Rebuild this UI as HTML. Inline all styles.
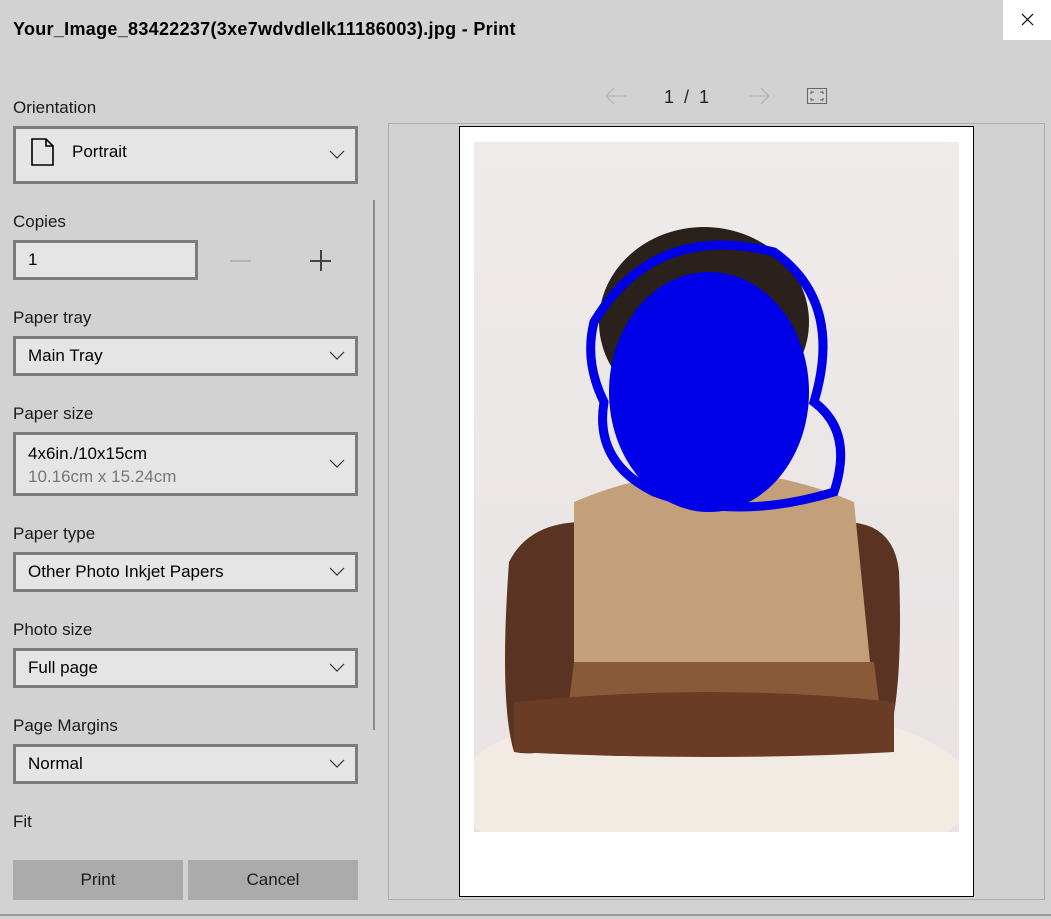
<!DOCTYPE html>
<html><head><meta charset="utf-8"><style>
*{margin:0;padding:0;box-sizing:border-box}
body{width:1051px;height:919px;background:#d2d2d2;font-family:"Liberation Sans",sans-serif;position:relative;overflow:hidden;color:#000}
.a{position:absolute}
.lbl{position:absolute;left:13px;font-size:17px;color:#1a1a1a}
.box{position:absolute;left:13px;width:345px;background:#e5e5e5;border:3px solid #7b7b7b;font-size:17px;padding-left:12px;display:flex;align-items:center}
.chev{position:absolute;right:10px;top:50%;margin-top:-5px}
.btn{position:absolute;top:860px;height:40px;width:170px;background:#ababab;font-size:17px;display:flex;align-items:center;justify-content:center;color:#1a1a1a}
</style></head><body>
<div class="a" style="left:13px;top:19px;font-size:18px;font-weight:bold;letter-spacing:0.3px">Your_Image_83422237(3xe7wdvdlelk11186003).jpg - Print</div>
<div class="a" style="left:1003px;top:0;width:48px;height:40px;background:#fff"><svg width="48" height="40"><path d="M19 14l11 11M30 14l-11 11" stroke="#000" stroke-width="1.2"/></svg></div>

<div class="lbl" style="top:98px">Orientation</div>
<div class="box" style="top:126px;height:58px;padding-left:14px;padding-bottom:6px"><svg width="26" height="30" style="margin-right:16px"><path d="M2 2h14l7 7v19H2z M16 2v7h7" fill="none" stroke="#000" stroke-width="1.6"/></svg>Portrait<svg class="chev" width="16" height="10"><path d="M1 1l7 7 7-7" fill="none" stroke="#333" stroke-width="1.2"/></svg></div>

<div class="lbl" style="top:212px">Copies</div>
<div class="box" style="top:240px;height:40px;width:185px">1</div>
<div class="a" style="left:230px;top:260px;width:21px;height:1.5px;background:#b4b4b4"></div>
<div class="a" style="left:310px;top:260px;width:21px;height:1.5px;background:#444"></div>
<div class="a" style="left:320px;top:250px;width:1.5px;height:21px;background:#444"></div>

<div class="lbl" style="top:308px">Paper tray</div>
<div class="box" style="top:336px;height:40px">Main Tray<svg class="chev" width="16" height="10"><path d="M1 1l7 7 7-7" fill="none" stroke="#333" stroke-width="1.2"/></svg></div>

<div class="lbl" style="top:404px">Paper size</div>
<div class="box" style="top:432px;height:64px;display:block;padding-top:7px;line-height:23px">4x6in./10x15cm<br><span style="color:#777">10.16cm x 15.24cm</span><svg class="chev" width="16" height="10"><path d="M1 1l7 7 7-7" fill="none" stroke="#333" stroke-width="1.2"/></svg></div>

<div class="lbl" style="top:524px">Paper type</div>
<div class="box" style="top:552px;height:40px">Other Photo Inkjet Papers<svg class="chev" width="16" height="10"><path d="M1 1l7 7 7-7" fill="none" stroke="#333" stroke-width="1.2"/></svg></div>

<div class="lbl" style="top:620px">Photo size</div>
<div class="box" style="top:648px;height:40px">Full page<svg class="chev" width="16" height="10"><path d="M1 1l7 7 7-7" fill="none" stroke="#333" stroke-width="1.2"/></svg></div>

<div class="lbl" style="top:716px">Page Margins</div>
<div class="box" style="top:744px;height:40px">Normal<svg class="chev" width="16" height="10"><path d="M1 1l7 7 7-7" fill="none" stroke="#333" stroke-width="1.2"/></svg></div>

<div class="lbl" style="top:812px">Fit</div>
<div class="btn" style="left:13px">Print</div>
<div class="btn" style="left:188px">Cancel</div>
<div class="a" style="left:373px;top:200px;width:2px;height:530px;background:#8a8a8a"></div>
<div class="a" style="left:0;top:914px;width:1051px;height:2px;background:#9a9a9a"></div>

<svg class="a" style="left:604px;top:86px" width="24" height="20"><path d="M2 10h20M2 10l8-8M2 10l8 8" fill="none" stroke="#b5b5b5" stroke-width="1.3"/></svg>
<div class="a" style="left:664px;top:87px;font-size:18px;color:#222">1&nbsp;&nbsp;/&nbsp;&nbsp;1</div>
<svg class="a" style="left:747px;top:86px" width="24" height="20"><path d="M2 10h20M22 10l-8-8M22 10l-8 8" fill="none" stroke="#b5b5b5" stroke-width="1.3"/></svg>
<svg class="a" style="left:807px;top:88px" width="20" height="16"><rect x="0.5" y="0.5" width="19" height="15" fill="none" stroke="#666"/><path d="M4 6V4h3M13 4h3v2M4 10v2h3M13 12h3v-2" fill="none" stroke="#555"/></svg>

<div class="a" style="left:388px;top:123px;width:657px;height:777px;border:1px solid #adadad"></div>
<div class="a" style="left:459px;top:126px;width:515px;height:771px;background:#fff;border:1px solid #000"></div>
<svg class="a" style="left:474px;top:142px" width="485" height="690">
<defs><linearGradient id="bg" x1="0" y1="0" x2="0" y2="1"><stop offset="0" stop-color="#efebea"/><stop offset="1" stop-color="#e8e2e3"/></linearGradient></defs>
<rect width="485" height="690" fill="url(#bg)"/>
<ellipse cx="240" cy="650" rx="260" ry="90" fill="#f1ebe3"/>
<path d="M35 420 Q55 380 110 380 L120 560 Q90 620 40 610 Q25 560 35 420z" fill="#5b3322"/>
<path d="M370 380 Q420 380 425 430 Q430 560 410 610 L360 600z" fill="#5b3322"/>
<path d="M100 360 Q240 300 380 360 L400 560 L100 560z" fill="#c4a07a"/>
<path d="M100 520 L400 520 L410 600 L90 600z" fill="#8a5a38"/>
<path d="M40 560 Q240 540 420 560 L420 610 Q240 620 40 610z" fill="#6a3b25"/>
<ellipse cx="230" cy="180" rx="105" ry="95" fill="#2a211c"/>
<ellipse cx="235" cy="250" rx="100" ry="120" fill="#0000e8"/>
<path d="M120 180 Q180 80 300 110 Q370 160 340 260 Q380 290 360 350 Q260 380 180 350 Q120 320 130 260 Q110 220 120 180z" fill="none" stroke="#0000e8" stroke-width="9"/>
</svg>
</body></html>
